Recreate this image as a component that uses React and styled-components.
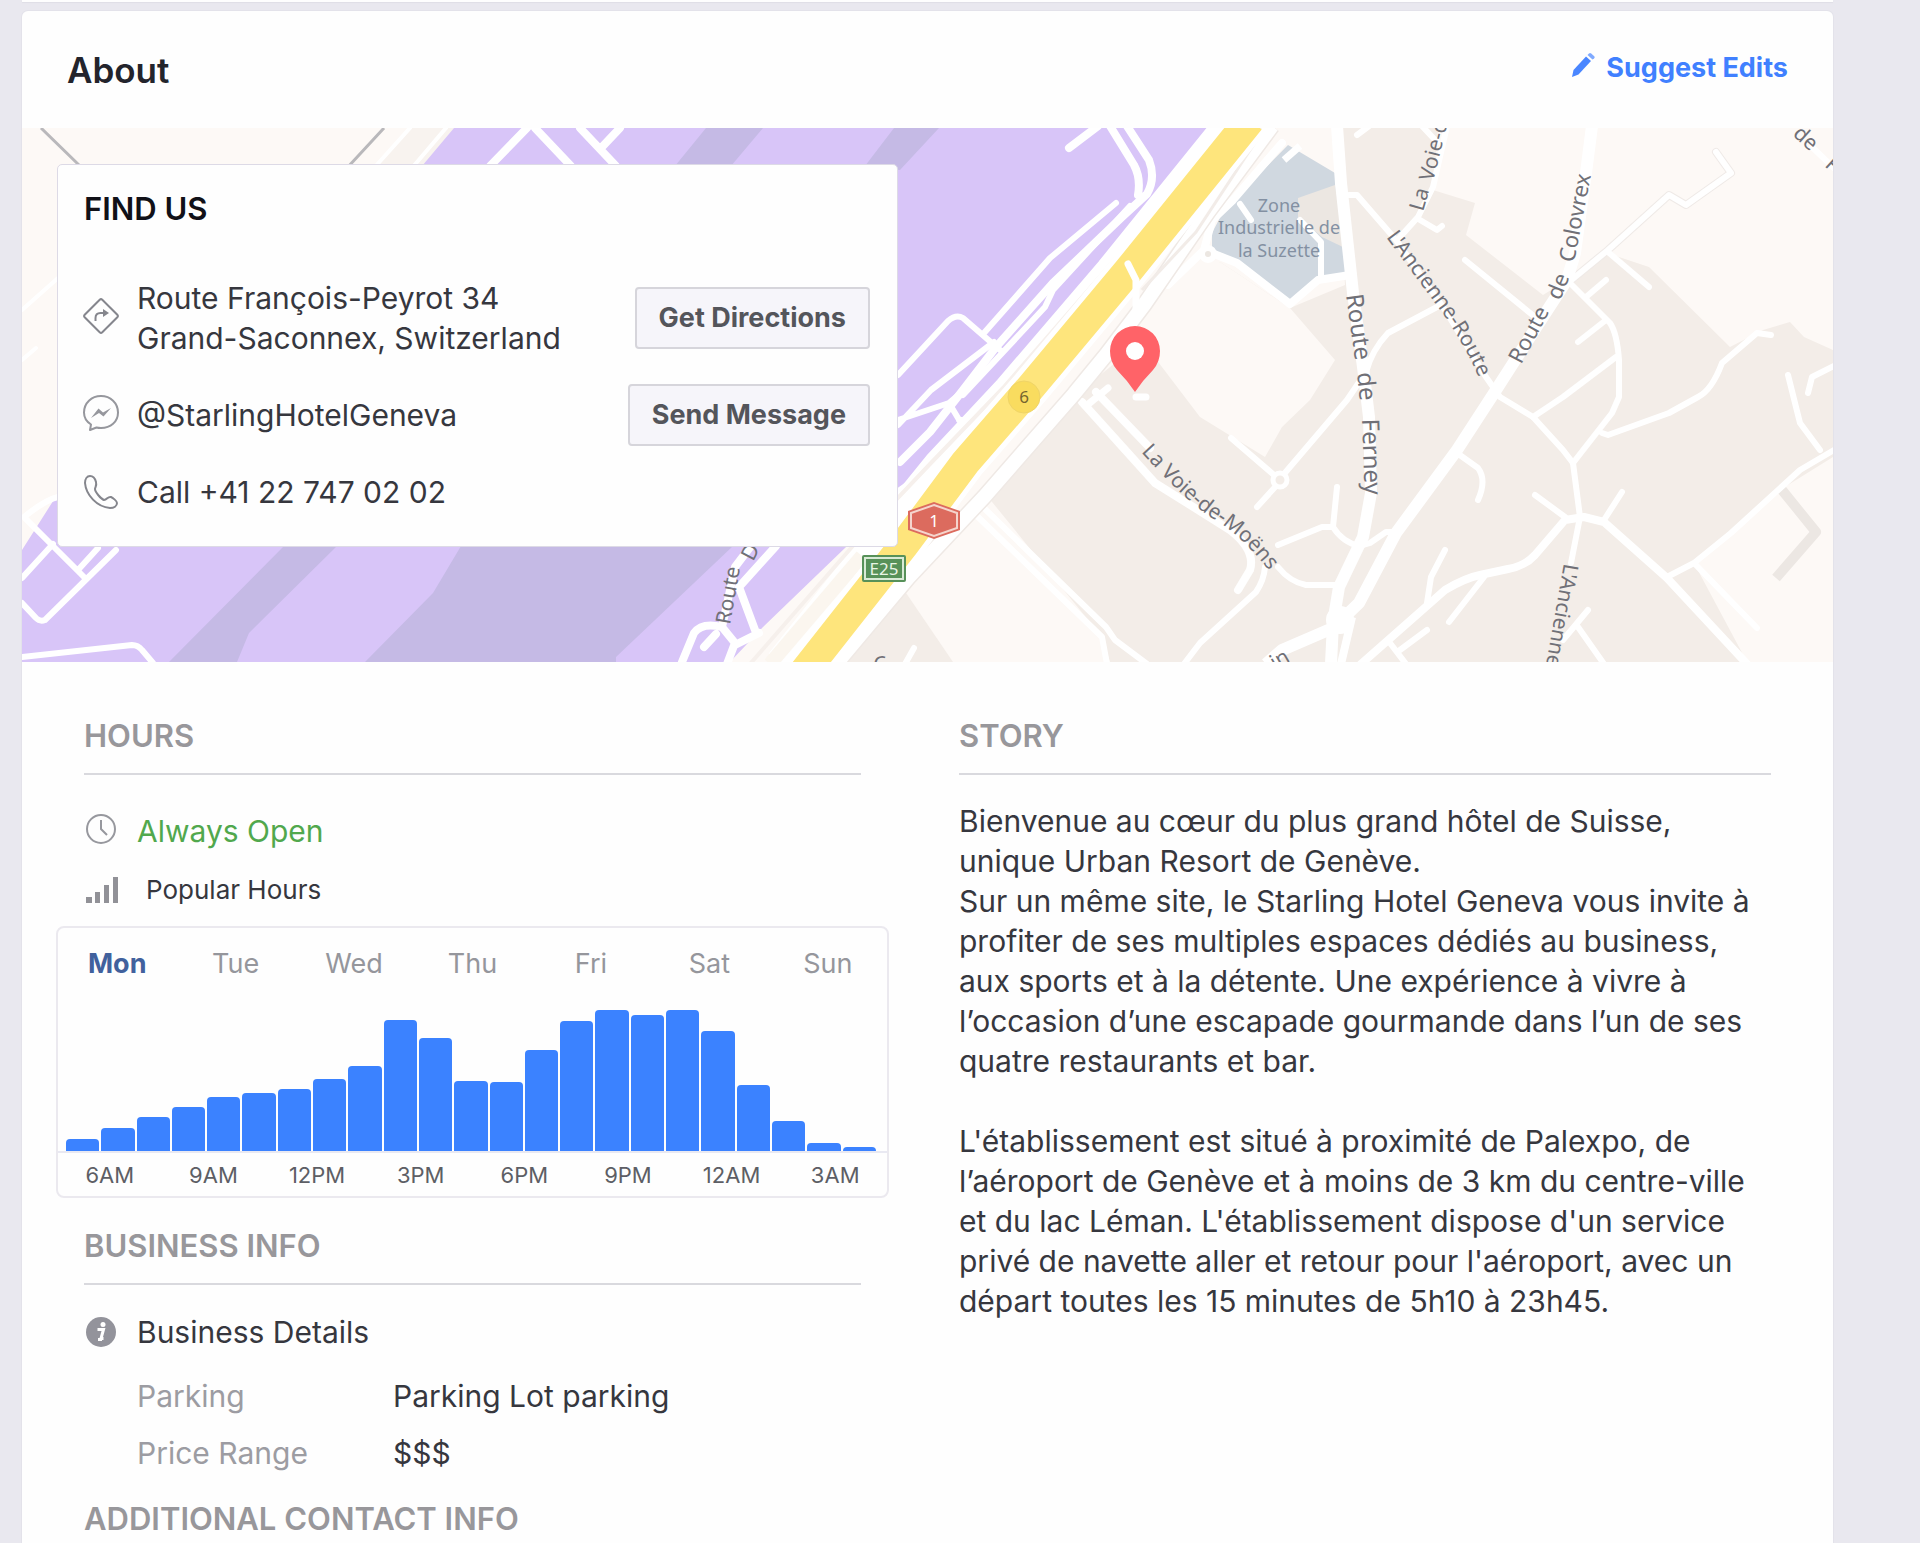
import React, { useState } from "react";
import styled, { createGlobalStyle } from "styled-components";

const hours = [12, 23, 34, 44, 54, 58, 62, 72, 85, 131, 113, 70, 69, 101, 130, 141, 136, 141, 120, 66, 30, 8, 4];
const days = ["Mon", "Tue", "Wed", "Thu", "Fri", "Sat", "Sun"];
const ticks = ["6AM", "9AM", "12PM", "3PM", "6PM", "9PM", "12AM", "3AM"];

const story = `Bienvenue au cœur du plus grand hôtel de Suisse,
unique Urban Resort de Genève.
Sur un même site, le Starling Hotel Geneva vous invite à
profiter de ses multiples espaces dédiés au business,
aux sports et à la détente. Une expérience à vivre à
l’occasion d’une escapade gourmande dans l’un de ses
quatre restaurants et bar.

L'établissement est situé à proximité de Palexpo, de
l’aéroport de Genève et à moins de 3 km du centre-ville
et du lac Léman. L'établissement dispose d'un service
privé de navette aller et retour pour l'aéroport, avec un
départ toutes les 15 minutes de 5h10 à 23h45.`;

/* ======================================================================= */
/* Icons */

const PencilIcon = () => (
  <svg width="24" height="24" viewBox="0 0 24 24" fill="#4a86ff">
    <path d="M0 24l1.500-7L14 3.500l5 4.500L6.500 21.500z" />
    <path d="M15.500 2l1.500-1.500q1-1 2.200 0l3 2.800q1 1 0 2L20.500 6.500z" opacity=".7" />
  </svg>
);

const DirectionsIcon = () => (
  <svg width="36" height="36" viewBox="0 0 36 36" fill="none" stroke="#85868d" strokeWidth="2">
    <path d="M16.700 1.700q1.300-1.200 2.600 0l15 15q1.200 1.300 0 2.600l-15 15q-1.300 1.200-2.600 0l-15-15q-1.200-1.300 0-2.600z" />
    <path d="M12.500 23v-3q0-5 5-5h5" />
    <path d="M20 11l6 4-6 4z" fill="#85868d" stroke="none" />
  </svg>
);

const MessengerIcon = () => (
  <svg width="36" height="36" viewBox="0 0 36 36" fill="none" stroke="#96979d" strokeWidth="2">
    <path d="M7 35l1-5.500Q1 25 1 17.500C1 8 8.500 1 18 1s17 7 17 16.500S27.500 33 18 33q-2.500 0-4.500-.5z" strokeLinejoin="round" />
    <path d="M8 23l7.500-9.500 4.500 4 8-4.500-7.500 8.500-4.500-3.500z" fill="#96979d" stroke="none" />
  </svg>
);

const PhoneIcon = () => (
  <svg width="36" height="36" viewBox="0 0 36 36" fill="none" stroke="#85868d" strokeWidth="2">
    <path d="M7 2C4 2 2 5 2 9c1 12 12 24 25 25 4 0 7-2 7-5 0-2-4-5-6-6-3-1-4 3-7 3-3-1-9-8-9-11 0-2 2-3 1-7-1-4-3-6-6-6z" strokeLinejoin="round" />
  </svg>
);

const ClockIcon = () => (
  <svg width="34" height="34" viewBox="0 0 34 34" fill="none" stroke="#97989e" strokeWidth="2">
    <circle cx="17" cy="17" r="14" />
    <path d="M17 8v9l6 6" />
  </svg>
);

const SignalIcon = () => (
  <svg width="36" height="28" viewBox="0 0 36 28" fill="#919197">
    <path d="M2 21h6v6H2zM11 16h5v11h-5zM20 9h5v18h-5zM29 1h5v26h-5z" />
  </svg>
);

const InfoIcon = () => (
  <svg width="34" height="34" viewBox="0 0 34 34">
    <circle cx="17" cy="17" r="15" fill="#93939b" />
    <circle cx="19" cy="9.500" r="2.500" fill="#fff" />
    <path d="M13.500 14.500h6l-2.500 9h2.500M14 24.500h4" fill="none" stroke="#fff" strokeWidth="3" />
  </svg>
);

/* ======================================================================= */
/* Map */

const MapDrawing = () => (
  <svg viewBox="22 128 1811 534" preserveAspectRatio="xMinYMin slice" width="100%" height="100%" aria-hidden="true">
    <defs>
      <path id="ancienneRoute" d="M1386 237L1440 310Q1466 345 1486 394" />
      <path id="voieMoens" d="M1141 452Q1190 506 1217 521Q1247 540 1276 580" />
    </defs>

    {/* ground */}
    <rect x="22" y="128" width="1811" height="534" fill="#fdf9f6" />
    <path d="M410 128h48l-36 40h-46z" fill="#f8f3ef" />
    <path d="M988 497L1082 390 1143 340 1220 262 1290 308 1345 285 1337 128H1438L1433 190 1475 203 1466 235 1543 295 1567 280 1604 252 1649 267 1730 347 1763 330 1790 322 1804 337 1833 350V457L1780 490 1694 563 1747 662H1110L1102 637z" fill="#f3ede8" />
    <path d="M1146 346L1155 302 1220 262 1290 308 1335 360 1310 400 1282 427 1265 457 1200 417z" fill="#fdf9f6" />
    <path d="M902 587L953 662H838z" fill="#f3ede8" />
    <path d="M1288 145L1335 173V183L1347 275 1318 280 1288 302 1237 263 1212 250V233L1224 210z" fill="#d0d8e0" />
    <path d="M1298 198L1335 185 1345 248 1322 237 1298 217z" fill="#ece7e2" />
    <path d="M1782 490L1816 532 1776 578" fill="none" stroke="#ece7e3" strokeWidth="10" strokeLinejoin="round" />

    {/* airport */}
    <path d="M454 128H1222L1163 197 1110 268 1004 387 955 452 900 495 845 548 763 627 730 662H22V550L55 498 200 430z" fill="#d8c5f8" />
    <path d="M284 546H337L249 633 237 662H169zM461 546H733L616 657V662H365L433 593zM706 128H763L731 166H675zM894 128H939L900 170 865 166z" fill="#c5bae5" />

    <g fill="none" stroke="#b9b8bb" strokeWidth="3">
      <path d="M41 128L80 166M384 128L347 168" />
    </g>

    {/* thin roads */}
    <g fill="none" stroke="#fff" strokeWidth="6" strokeLinecap="round" strokeLinejoin="round">
      <path d="M22 310L58 278M22 360L36 348M410 128L374 168M446 128L412 168" strokeWidth="4" />
      <path d="M527 128L490 166M535 128L571 166M580 128L616 166M620 128L602 147" strokeWidth="8" />
      <path d="M58 497Q45 500 24 517L84 577M22 578L53 544M98 548L78 570M116 550L45 620Q40 622 36 618L22 603M22 657L132 645Q138 645 142 650L153 663" />
      <path d="M1069 148L1098 126M1110 126L1134 165Q1141 178 1138 195M1127 126L1149 160Q1156 178 1147 194L1122 217 1053 283 996 347 963 390 930 432 900 462" strokeWidth="8" />
      <path d="M1116 203L1050 258 984 333M1130 206L1053 290 1045 307 963 395M898 375L948 321Q956 314 963 318L1000 350M994 342L931 390 898 425M976 380L949 403 898 420M949 403L961 423V447L900 490M959 420H980" />
      <path d="M776 546L739 587 755 630M751 546L735 567 722 627 735 643 727 664M682 662L694 633Q702 622 722 627M704 647L716 634M735 645L759 633" strokeWidth="8" />
      <path d="M1349 195H1357L1396 240 1445 310 1486 377 1500 397 1533 417 1563 450 1573 463 1580 517 1571 563" />
      <path d="M1447 126L1433 187 1418 217 1400 237M1420 220L1437 230 1442 226M1422 126L1437 142M1369 126L1357 135M1465 260L1535 317" />
      <path d="M1437 307L1388 333Q1372 350 1366 372L1347 400 1284 474M1276 486L1257 507M1231 438L1274 475" />
      <path d="M1569 282L1608 250 1669 195 1686 205 1731 173 1716 152" stroke="#efeae7" strokeWidth="8" />
      <path d="M1569 282L1608 250 1669 195 1686 205 1731 173 1716 152" />
      <path d="M1608 252L1649 287M1569 282L1610 323Q1617 333 1619 360V397L1612 413 1573 463M1606 280L1586 297M1606 320L1578 342M1616 357L1563 397 1533 417" />
      <path d="M1771 335L1757 333 1722 363Q1712 390 1698 397L1669 413 1608 435 1602 433M1834 366L1812 377 1808 393M1788 375L1800 423 1820 450" />
      <path d="M1834 450L1800 470 1731 533 1694 563 1667 577M1694 563L1757 628" />
      <path d="M1747 664L1667 578 1604 522 1584 517 1565 520 1535 555Q1525 566 1508 569L1480 575Q1465 578 1445 590L1361 664" strokeWidth="8" />
      <path d="M1535 495L1565 517M1622 492L1604 520M1457 453L1478 468Q1487 480 1478 500" />
      <path d="M1337 487L1333 527Q1343 543 1360 546L1370 543 1386 532H1394M1278 545L1322 527H1332M1278 567Q1290 582 1306 585H1335" />
      <path d="M1265 567Q1264 580 1256 592L1200 643 1184 664M1445 550L1431 577 1427 603M1484 577L1449 622M1427 630L1400 650M1390 643L1406 664M1588 610L1563 640M1578 627L1604 664" />
      <path d="M1082 402L1155 483 1230 530Q1256 550 1250 570L1238 590M1096 392L1150 448" strokeWidth="8" />
      <path d="M984 508L1106 627 1115 640 1147 664M976 515L1102 637 1107 664" />
      <path d="M1812 147L1834 168M914 648L905 664" />
      <path d="M1240 204L1251 220M1300 220L1321 242V280" />
      <path d="M1282 143L1233 200 1212 220 1204 250 1237 263 1290 304 1318 280 1350 275M1204 250L1168 285" strokeWidth="8" />
    </g>
    <circle cx="1280" cy="480" r="7" fill="#f3ede8" stroke="#fff" strokeWidth="5" />
    <circle cx="1208" cy="254" r="6" fill="#ece7e2" stroke="#fff" strokeWidth="6" />
    <path d="M1284 160L1300 146" stroke="#fff" strokeWidth="7" />

    {/* main roads */}
    <g fill="none" stroke="#fff" strokeWidth="12" strokeLinejoin="round">
      <path d="M1337 126L1341 183 1353 293 1363 367 1369 417 1371 493 1363 537 1339 587 1333 623 1331 664" />
      <path d="M1592 126L1586 173 1575 253 1567 280 1539 323 1496 390 1457 450 1396 533 1359 603 1333 628 1282 650 1266 664" />
      <path d="M1352 617L1341 664" strokeWidth="8" />
      <circle cx="1340" cy="620" r="8" fill="#fff" />
    </g>

    {/* motorway */}
    <g fill="none">
      <path d="M1238 116L1112 272 1010 391 940 466 880 540 782 664" stroke="#fff" strokeWidth="34" />
      <path d="M1228 126L1104 272 1003 388 930 464 858 540 750 664" stroke="#f6f0ec" strokeWidth="4" />
      <path d="M862 556L770 664" stroke="#fbf6ef" strokeWidth="14" />
      <path d="M1272 126L1208 212 1144 305 1106 355 1074 394 984 497 908 578 836 664" stroke="#efe9e5" strokeWidth="17" />
      <path d="M1272 126L1208 212 1144 305 1106 355 1074 394 984 497 908 578 836 664" stroke="#fff" strokeWidth="14" />
      <path d="M1262 132L1196 232 1142 290" stroke="#f2ece8" strokeWidth="3" />
      <path d="M1250 120L1128 271 1031 387 965 463 904 545 804 672" stroke="#fff" strokeWidth="40" />
      <path d="M1250 120L1128 271 1031 387 965 463 904 545 804 672" stroke="#fee57c" strokeWidth="30" />
      <path d="M1136 312V280L1128 264M1086 406L1108 388M1136 397h10" stroke="#fff" strokeWidth="7" strokeLinecap="round" />
    </g>

    {/* street names */}
    <g fontFamily='"Noto Sans", sans-serif' fontSize="22" fill="#707077">
      <g fontSize="18" fill="#8390a2" textAnchor="middle">
        <text x="1279" y="212">Zone</text>
        <text x="1279" y="234">Industrielle de</text>
        <text x="1279" y="257">la Suzette</text>
      </g>
      <g fontSize="24">
        <text transform="translate(1346 295) rotate(82)">Route</text>
        <text transform="translate(1357 373) rotate(84)">de</text>
        <text transform="translate(1362 419) rotate(88)">Ferney</text>
      </g>
      <text transform="translate(1521 365) rotate(-62)">Route</text>
      <text transform="translate(1560 301) rotate(-68)">de</text>
      <text transform="translate(1574 263) rotate(-79)">Colovrex</text>
      <g fontSize="21">
        <text transform="translate(1423 212) rotate(-74)">La</text>
        <text transform="translate(1433 182) rotate(-76)">Voie-d</text>
        <text><textPath href="#ancienneRoute">L'Ancienne-Route</textPath></text>
        <text><textPath href="#voieMoens">La Voie-de-Moëns</textPath></text>
        <text transform="translate(1564 563) rotate(100)">L'Ancienne</text>
        <text transform="translate(730 625) rotate(-80)">Route</text>
        <text transform="translate(753 562) rotate(-62)">D</text>
        <text transform="translate(1275 670) rotate(-30)">in</text>
        <text transform="translate(874 672) rotate(-5)">C</text>
        <text transform="translate(1792 135) rotate(42)">de</text>
        <text transform="translate(1824 166) rotate(42)">F</text>
      </g>
    </g>

    {/* road shields */}
    <circle cx="1024" cy="397" r="16" fill="#f9dc5f" stroke="#efd468" strokeWidth="1" />
    <text x="1024" y="403" textAnchor="middle" fontFamily='"Noto Sans", sans-serif' fontSize="17" fill="#76652f">6</text>
    <path d="M934 502L960 511V530L934 539 908 530V511z" fill="#dc6b5e" />
    <path d="M934 505L957 513V528L934 536 911 528V513z" fill="#dc6b5e" stroke="#f5d5cd" strokeWidth="2" />
    <text x="934" y="527" textAnchor="middle" fontFamily='"Noto Sans", sans-serif' fontSize="17" fill="#fff">1</text>
    <rect x="862" y="555" width="44" height="27" rx="2" fill="#579159" />
    <rect x="865" y="558" width="38" height="21" fill="#579159" stroke="#d9ead6" strokeWidth="2" />
    <text x="884" y="575" textAnchor="middle" fontFamily='"Noto Sans", sans-serif' fontSize="17" fill="#e8f4e5">E25</text>

    {/* pin */}
    <path d="M1135 392Q1127 380 1117 370 1110 362 1110 351A25 25 0 0 1 1160 351Q1160 362 1153 370 1143 380 1135 392z" fill="#ff6368" />
    <circle cx="1135" cy="351" r="9" fill="#fff" />
  </svg>
);

/* ======================================================================= */
/* Page */

const App = () => {
  const [day, setDay] = useState("Mon");

  return (
    <Page>
      <GlobalStyle />
      <PreviousCard />
      <Card>
        <Header>
          <Title>About</Title>
          <EditLink href="#edit">
            <PencilIcon />
            Suggest Edits
          </EditLink>
        </Header>

        <MapSection>
          <MapCanvas>
            <MapDrawing />
          </MapCanvas>
          <FindUs>
            <PanelTitle>FIND US</PanelTitle>
            <Contact>
              <IconCell $raised><DirectionsIcon /></IconCell>
              <ContactText>
                Route François-Peyrot 34
                <br />
                Grand-Saconnex, Switzerland
              </ContactText>
              <Button type="button">Get Directions</Button>
            </Contact>
            <Contact>
              <IconCell $raised><MessengerIcon /></IconCell>
              <ContactText>@StarlingHotelGeneva</ContactText>
              <Button type="button">Send Message</Button>
            </Contact>
            <Contact>
              <IconCell><PhoneIcon /></IconCell>
              <ContactText>Call +41 22 747 02 02</ContactText>
            </Contact>
          </FindUs>
        </MapSection>

        <Columns>
          <div>
            <SectionTitle $ruled>HOURS</SectionTitle>
            <OpenRow>
              <IconCell $raised><ClockIcon /></IconCell>
              Always Open
            </OpenRow>
            <PopularRow>
              <SignalIcon />
              Popular Hours
            </PopularRow>

            <Chart>
              <Days>
                {days.map((name) => (
                  <Day key={name} type="button" $active={name === day} onClick={() => setDay(name)}>
                    {name}
                  </Day>
                ))}
              </Days>
              <Bars>
                {hours.map((height, i) => (
                  <Bar key={i} style={{ height }} />
                ))}
              </Bars>
              <Ticks>
                {ticks.map((tick) => (
                  <span key={tick}>{tick}</span>
                ))}
              </Ticks>
            </Chart>

            <SectionTitle $ruled>BUSINESS INFO</SectionTitle>
            <DetailsRow>
              <IconCell><InfoIcon /></IconCell>
              Business Details
            </DetailsRow>
            <Details>
              <dt>Parking</dt>
              <dd>Parking Lot parking</dd>
              <dt>Price Range</dt>
              <dd>$$$</dd>
            </Details>
            <SectionTitle>ADDITIONAL CONTACT INFO</SectionTitle>
          </div>

          <div>
            <SectionTitle $ruled>STORY</SectionTitle>
            <Story>{story}</Story>
          </div>
        </Columns>
      </Card>
    </Page>
  );
};

const GlobalStyle = createGlobalStyle`
  * {
    box-sizing: border-box;
  }

  body {
    margin: 0;
    background: #e9e8ef;
    color: #36373e;
    font-family: Inter, "Liberation Sans", sans-serif;
    font-size: 30px;
    line-height: 40px;
  }

  h1, h2, h3, p, dl, dd {
    margin: 0;
  }

  svg {
    display: block;
    flex: none;
  }
`;

const Page = styled.div`
  display: flex;
  flex-direction: column;
  min-height: 100vh;
  padding: 0 87px 0 22px;
`;

const PreviousCard = styled.div`
  height: 2px;
  margin-bottom: 9px;
  background: #fefefe;
  box-shadow: 0 1px 1px #dfdee6;
`;

const Card = styled.main`
  flex: 1;
  background: #fefefe;
  border-radius: 6px 6px 0 0;
  box-shadow: 0 0 0 1px #e3e2ea;
`;

const Header = styled.header`
  display: flex;
  align-items: center;
  justify-content: space-between;
  height: 117px;
  padding: 0 45px;
`;

const Title = styled.h1`
  color: #23242c;
  font-size: 35px;
  font-weight: 600;
`;

const EditLink = styled.a`
  display: flex;
  align-items: center;
  gap: 10px;
  padding-bottom: 4px;
  color: #4080ff;
  font-size: 27px;
  font-weight: 700;
  text-decoration: none;

  svg {
    margin-bottom: 6px;
  }
`;

const MapSection = styled.section`
  position: relative;
  height: 534px;
  padding: 36px 35px 0;
`;

const MapCanvas = styled.div`
  position: absolute;
  inset: 0;
  overflow: hidden;
`;

const FindUs = styled.div`
  position: relative;
  display: flex;
  flex-direction: column;
  gap: 26px;
  max-width: 841px;
  padding: 24px 27px 34px 26px;
  background: #fefefe;
  border: 1px solid #dddae6;
  border-radius: 5px;
`;

const PanelTitle = styled.h2`
  margin-bottom: 23px;
  color: #111118;
  font-size: 31px;
  font-weight: 600;
`;

const Contact = styled.div`
  display: flex;
  align-items: center;
`;

const IconCell = styled.span`
  display: flex;
  justify-content: center;
  width: 34px;
  margin-right: 19px;
  padding-bottom: ${(props) => (props.$raised ? "5px" : "0")};
`;

const ContactText = styled.span`
  flex: 1;
`;

const Button = styled.button`
  height: 62px;
  padding: 0 22px;
  background: #f6f5fa;
  border: 2px solid #d6d5db;
  border-radius: 4px;
  color: #54555b;
  font: 700 27px/40px Inter, "Liberation Sans", sans-serif;
`;

const Columns = styled.div`
  display: grid;
  grid-template-columns: 777fr 812fr;
  gap: 98px;
  padding: 54px 62px 0 62px;
`;

const SectionTitle = styled.h2`
  padding-bottom: ${(props) => (props.$ruled ? "17px" : "0")};
  border-bottom: ${(props) => (props.$ruled ? "2px solid #d9d9de" : "none")};
  color: #98979b;
  font-size: 31px;
  font-weight: 600;
`;

const OpenRow = styled.div`
  display: flex;
  align-items: center;
  margin-top: 36px;
  color: #51a84d;
`;

const PopularRow = styled.h3`
  display: flex;
  align-items: center;
  gap: 26px;
  margin: 19px 0 16px;
  font-size: 26px;
  font-weight: 400;
`;

const Chart = styled.div`
  margin: 0 -28px 28px;
  padding: 16px 0 1px;
  border: 2px solid #ebe9ef;
  border-radius: 8px;
`;

const Days = styled.div`
  display: grid;
  grid-template-columns: repeat(7, 1fr);
`;

const Day = styled.button`
  padding: 0;
  background: none;
  border: 0;
  color: ${(props) => (props.$active ? "#41619d" : "#95969c")};
  font: ${(props) => (props.$active ? 700 : 400)} 27px/40px Inter, "Liberation Sans", sans-serif;
`;

const Bars = styled.div`
  display: flex;
  align-items: flex-end;
  gap: 2px;
  height: 169px;
  padding: 0 11px 0 8px;
  border-bottom: 2px solid #e9e9f2;
`;

const Bar = styled.div`
  flex: 1;
  background: #3b82ff;
  border-radius: 4px 4px 0 0;
`;

const Ticks = styled.div`
  display: grid;
  grid-template-columns: repeat(8, 1fr);
  padding-top: 2px;
  color: #5d5e65;
  font-size: 22px;
  text-align: center;
`;

const DetailsRow = styled.div`
  display: flex;
  align-items: center;
  margin: 27px 0 24px;
`;

const Details = styled.dl`
  display: grid;
  grid-template-columns: 256px 1fr;
  row-gap: 17px;
  margin: 0 0 26px 53px;

  dt {
    color: #9c9ca2;
  }
`;

const Story = styled.p`
  margin-top: 26px;
  white-space: pre-line;
`;

export default App;
